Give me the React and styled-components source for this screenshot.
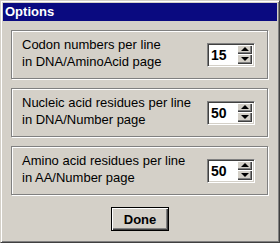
import React from "react";
import styled, { createGlobalStyle } from "styled-components";

const GlobalStyle = createGlobalStyle`
  html, body {
    margin: 0;
    padding: 0;
    background: #d4d0c8;
  }
  * {
    box-sizing: border-box;
  }
`;

const options = [
  { id: "codon", lines: ["Codon numbers per line", "in DNA/AminoAcid page"], value: 15 },
  { id: "nucleic", lines: ["Nucleic acid residues per line", "in DNA/Number page"], value: 50 },
  { id: "amino", lines: ["Amino acid residues per line", "in AA/Number page"], value: 50 },
];

const Window = styled.div`
  width: 280px;
  height: 243px;
  display: flex;
  flex-direction: column;
  background: #d4d0c8;
  border: 1px solid;
  border-color: #d4d0c8 #404040 #404040 #d4d0c8;
  box-shadow: inset 1px 1px #fff, inset -1px -1px #808080;
  padding: 2px;
  font-family: "Liberation Sans", Arial, sans-serif;
`;

const TitleBar = styled.div`
  height: 18px;
  flex: none;
  background: #0a0a80;
  color: #fff;
  font-weight: bold;
  font-size: 13px;
  line-height: 18px;
  padding-left: 2px;
`;

const Body = styled.div`
  flex: 1;
  display: flex;
  flex-direction: column;
  gap: 9px;
  padding: 9px 9px 0 8px;
`;

const Group = styled.div`
  height: 49px;
  display: flex;
  align-items: center;
  justify-content: space-between;
  border: 1px solid #808080;
  box-shadow: inset 1px 1px #fff, 1px 1px #fff;
  padding: 0 12px 0 10px;
`;

const Label = styled.div`
  font-size: 13px;
  line-height: 17px;
  color: #000;
  margin-top: -4px;
`;

const Spinner = styled.div`
  width: 48px;
  height: 24px;
  display: flex;
  border: 1px solid;
  border-color: #808080 #fff #fff #808080;
  background: #fff;
  box-shadow: inset 1px 1px #404040, inset -1px -1px #d4d0c8;
  padding: 1px 2px 2px 1px;
`;

const Value = styled.div`
  flex: 1;
  font-size: 14px;
  font-weight: bold;
  line-height: 21px;
  padding-left: 2px;
  color: #000;
`;

const SpinButtons = styled.div`
  width: 15px;
  display: flex;
  flex-direction: column;
`;

const SpinButton = styled.div`
  flex: 1;
  display: flex;
  align-items: center;
  justify-content: center;
  background: #d4d0c8;
  box-shadow: inset 1px 1px #fff, inset -1px -1px #404040, inset -2px -2px #808080;
`;

const Arrow = styled.div`
  width: 0;
  height: 0;
  border-left: 4px solid transparent;
  border-right: 4px solid transparent;
  ${(p) => (p.$up ? "border-bottom: 4px solid #000;" : "border-top: 4px solid #000;")}
`;

const Footer = styled.div`
  display: flex;
  justify-content: center;
  padding-top: 3px;
`;

const Button = styled.button`
  width: 58px;
  height: 24px;
  margin-left: 1px;
  background: #d4d0c8;
  border: 1px solid #000;
  box-shadow: inset 1px 1px #fff, inset -1px -1px #404040, inset -2px -2px #808080;
  font-family: "Liberation Sans", Arial, sans-serif;
  font-size: 13px;
  font-weight: bold;
  color: #000;
  padding: 0;
`;

export default function App() {
  return (
    <>
      <GlobalStyle />
      <Window>
        <TitleBar>Options</TitleBar>
        <Body>
          {options.map((o) => (
            <Group key={o.id}>
              <Label>
                {o.lines[0]}
                <br />
                {o.lines[1]}
              </Label>
              <Spinner>
                <Value>{o.value}</Value>
                <SpinButtons>
                  <SpinButton>
                    <Arrow $up />
                  </SpinButton>
                  <SpinButton>
                    <Arrow />
                  </SpinButton>
                </SpinButtons>
              </Spinner>
            </Group>
          ))}
          <Footer>
            <Button>Done</Button>
          </Footer>
        </Body>
      </Window>
    </>
  );
}
